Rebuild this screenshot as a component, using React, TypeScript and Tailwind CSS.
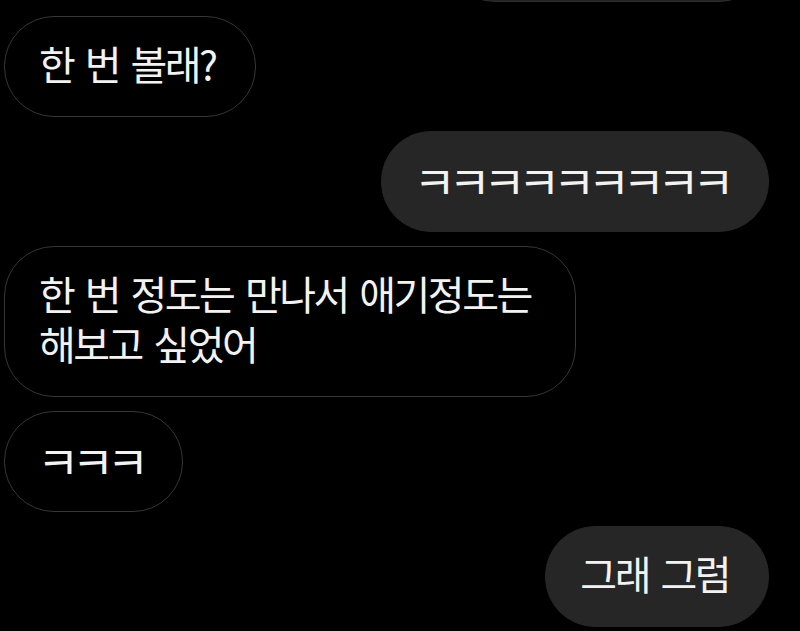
import React from "react"

interface Message {
  id: number
  text: string
  mine: boolean
  laugh?: boolean
}

const messages: Message[] = [
  { id: 1, text: "한 번 볼래?", mine: false },
  { id: 2, text: "ㅋㅋㅋㅋㅋㅋㅋㅋㅋ", mine: true, laugh: true },
  { id: 3, text: "한 번 정도는 만나서 애기정도는 해보고 싶었어", mine: false },
  { id: 4, text: "ㅋㅋㅋ", mine: false, laugh: true },
  { id: 5, text: "그래 그럼", mine: true },
]

function Bubble({ msg }: { msg: Message }) {
  return (
    <div className={msg.mine ? "flex justify-end pr-[31px]" : "flex justify-start pl-[4px]"}>
      <div
        className={
          "max-w-[572px] rounded-[50px] border leading-[50px] break-keep " +
          (msg.mine ? "border-[#262626] bg-[#262626]" : "border-[#363636] bg-black") +
          (msg.laugh
            ? " pt-[22px] pb-[27px] pl-[32px] pr-[41px] text-[46px] tracking-[-7.5px]"
            : " pt-[21px] pb-[28px] pl-[34px] pr-[39px] text-[40px] tracking-[-2.5px] [word-spacing:5px]")
        }
      >
        {msg.text}
      </div>
    </div>
  )
}

export default function App() {
  return (
    <div className="h-[631px] w-[800px] overflow-hidden bg-black font-['Noto_Sans_CJK_KR',sans-serif] text-[#f2f2f2]">
      <div className="flex flex-col gap-[14px]">
        {/* previous message, mostly scrolled off */}
        <div className="-mt-[99px] flex justify-end pr-[31px]">
          <div className="h-[101px] w-[324px] rounded-[50px] border border-[#2e2e2e] bg-[#222222]" />
        </div>
        {messages.map((m) => (
          <Bubble key={m.id} msg={m} />
        ))}
      </div>
    </div>
  )
}
